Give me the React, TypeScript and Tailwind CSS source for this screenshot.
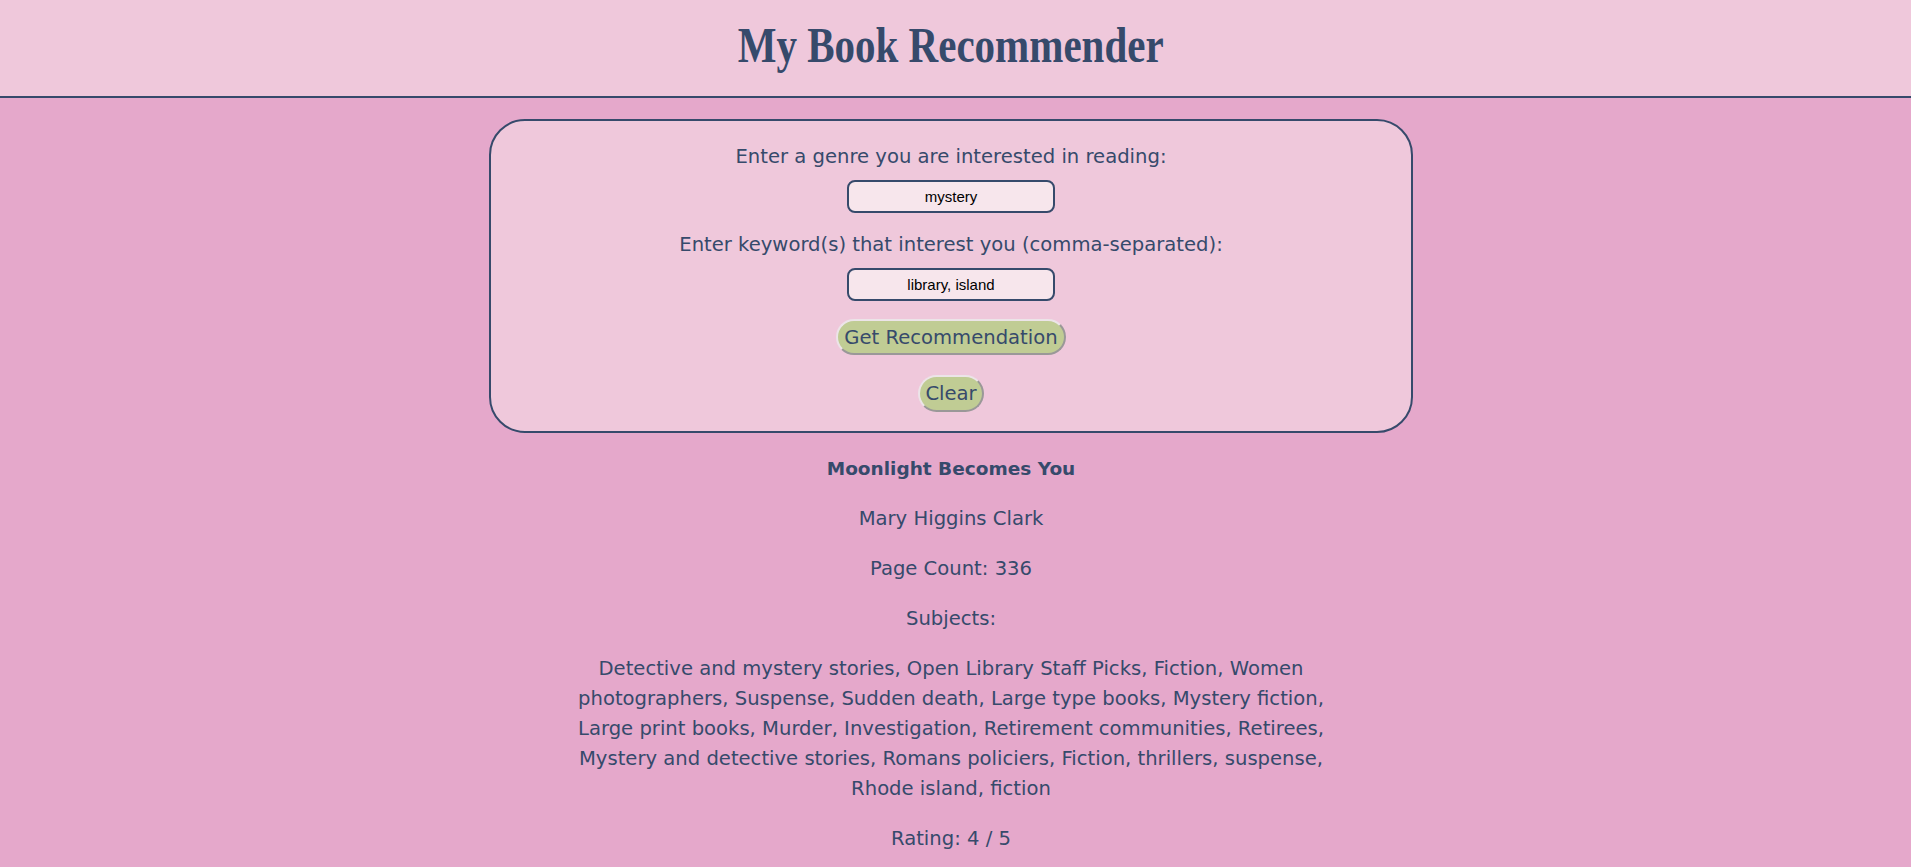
import React from 'react';

const subjects =
  'Detective and mystery stories, Open Library Staff Picks, Fiction, Women photographers, Suspense, Sudden death, Large type books, Mystery fiction, Large print books, Murder, Investigation, Retirement communities, Retirees, Mystery and detective stories, Romans policiers, Fiction, thrillers, suspense, Rhode island, fiction';

export default function App() {
  return (
    <div className="min-h-screen bg-[#e5a8cb] text-[#364a6b] font-['DejaVu_Sans',sans-serif]">
      {/* Header */}
      <header className="h-[98px] bg-[#efc8db] border-b-2 border-[#364a6b] flex items-center justify-center pr-[9px]">
        <h1 className="font-['Liberation_Serif',serif] font-bold text-[50px] leading-none -mt-[6px] scale-x-[0.82]">
          My Book Recommender
        </h1>
      </header>

      <main className="pr-[9px]">
        {/* Form card */}
        <div className="w-[924px] mx-auto mt-[21px] bg-[#efc8db] border-2 border-[#364a6b] rounded-[36px] pt-[22px] pb-[19px] flex flex-col items-center text-[19.6px] leading-[27px]">
          <label>Enter a genre you are interested in reading:</label>
          <input
            defaultValue="mystery"
            className="mt-[10px] w-[208px] h-[33px] bg-[#f7e6ec] border-2 border-[#364a6b] rounded-[8px] text-center text-black text-[15px] font-['Liberation_Sans',sans-serif] outline-none"
          />
          <label className="mt-[18px]">Enter keyword(s) that interest you (comma-separated):</label>
          <input
            defaultValue="library, island"
            className="mt-[10px] w-[208px] h-[33px] bg-[#f7e6ec] border-2 border-[#364a6b] rounded-[8px] text-center text-black text-[15px] font-['Liberation_Sans',sans-serif] outline-none"
          />
          <button className="mt-[18px] h-[36px] px-[6px] bg-[#c0cc94] rounded-full border-2 border-t-[#ece4e8] border-l-[#ece4e8] border-r-[#9a9898] border-b-[#9a9898]">
            Get Recommendation
          </button>
          <button className="mt-[20px] h-[37px] px-[5px] bg-[#c0cc94] rounded-full border-2 border-t-[#ece4e8] border-l-[#ece4e8] border-r-[#9a9898] border-b-[#9a9898]">
            Clear
          </button>
        </div>

        {/* Result */}
        <div className="w-[760px] mx-auto mt-[21px] text-center text-[19.6px] leading-[30px] flex flex-col gap-[20px] pb-[20px]">
          <p className="font-bold text-[18.5px]">Moonlight Becomes You</p>
          <p>Mary Higgins Clark</p>
          <p>Page Count: 336</p>
          <p>Subjects:</p>
          <p>{subjects}</p>
          <p>Rating: 4 / 5</p>
        </div>
      </main>
    </div>
  );
}
